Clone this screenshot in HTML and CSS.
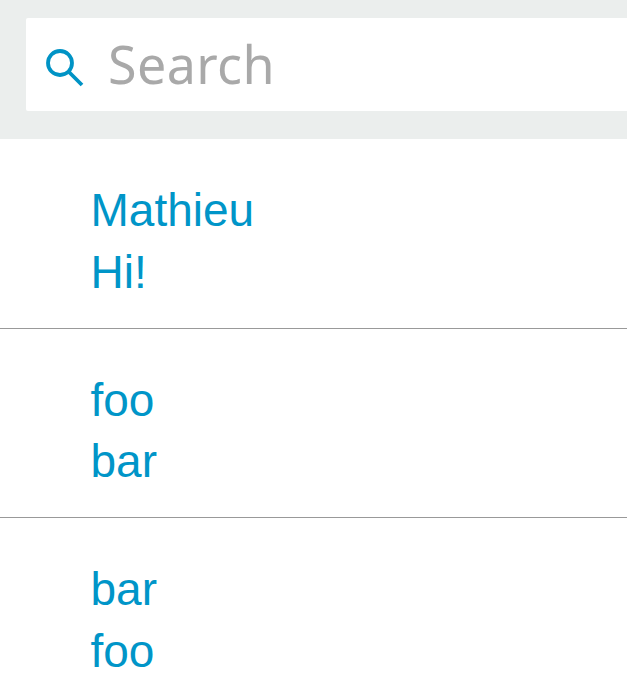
FILE: index.html
```
<!DOCTYPE html>
<html lang="en">
<head>
<meta charset="utf-8">
<title>Messages</title>
<link rel="stylesheet" href="styles.css">
</head>
<body>
<header class="search-bar">
  <label class="search-field">
    <svg class="search-icon" viewBox="0 0 40 40" aria-hidden="true"><circle cx="14" cy="16" r="12"/><path d="M22.5 24.5L36 38"/></svg>
    <span class="search-text">Search</span>
  </label>
</header>
<ul class="messages">
  <li class="message"><div>Mathieu</div><div>Hi!</div></li>
  <li class="message"><div>foo</div><div>bar</div></li>
  <li class="message"><div>bar</div><div>foo</div></li>
</ul>
</body>
</html>
```
FILE: styles.css
```
* { box-sizing: border-box; }
body { margin: 0; height: 700px; overflow: hidden; background: #fff; font-family: "Liberation Sans", sans-serif; }
.search-bar { height: 139px; padding: 18px 0 28px 26px; background: #ebeeed; }
.search-field { display: flex; align-items: center; height: 93px; padding: 5px 0 0 20px; border-radius: 2px 0 0 2px; background: #fff; }
.search-icon { width: 40px; height: 40px; margin-right: 22px; fill: none; stroke: #0093c5; stroke-width: 3.8; }
.search-text { padding-bottom: 7px; font: 52px/60px "Noto Sans", sans-serif; letter-spacing: 0.4px; color: #a9a9a9; }
.messages { margin: 0; padding: 0; list-style: none; }
.message { height: 189.5px; padding: 41px 0 0 90.5px; border-bottom: 1px solid #999; color: #0095c8; font-size: 46px; line-height: 61.5px; }
.message:last-child { border: 0; }
```
